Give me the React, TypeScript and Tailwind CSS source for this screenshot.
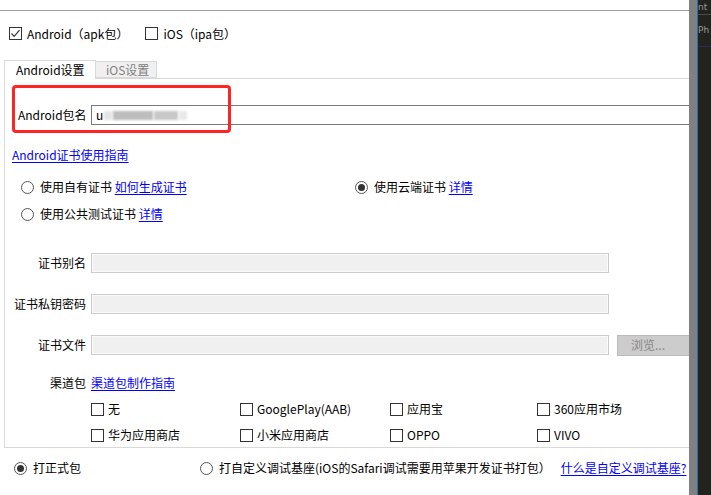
import React from "react";

const font = "font-['Noto_Sans_CJK_SC','Noto_Sans',sans-serif]";

function Check({ checked = false }: { checked?: boolean }) {
  return (
    <span className="flex h-[13px] w-[13px] shrink-0 items-center justify-center border border-[#333] bg-white">
      {checked && (
        <svg width="11" height="11" viewBox="0 0 11 11">
          <path d="M1.5 5.5 L4.2 8.3 L9.5 2.2" fill="none" stroke="#333" strokeWidth="1.2" />
        </svg>
      )}
    </span>
  );
}

function Radio({ checked = false }: { checked?: boolean }) {
  return (
    <span className="flex h-[13px] w-[13px] shrink-0 items-center justify-center rounded-full border border-[#555] bg-white">
      {checked && <span className="h-[7px] w-[7px] rounded-full bg-[#333]" />}
    </span>
  );
}

function Link({ children }: { children: React.ReactNode }) {
  return <span className="text-[#0000ff] underline underline-offset-2">{children}</span>;
}

function Field({ label, browse = false }: { label: string; browse?: boolean }) {
  return (
    <div className="flex h-[20px] items-center">
      <span className="w-[81px] shrink-0 text-right">{label}</span>
      <div className="ml-[5px] h-[20px] w-[518px] shrink-0 border border-[#cccccc] bg-[#f0f0f0] shadow-[inset_0_0_0_1px_#fafafa]" />
      {browse && (
        <div className="ml-[8px] flex h-[21px] w-[80px] shrink-0 items-center border border-[#bbbbbb] bg-[#cccccc] pl-[13px] text-[#888]">
          浏览...
        </div>
      )}
    </div>
  );
}

function Channel({ label }: { label: string }) {
  return (
    <div className="flex h-[16px] items-center gap-[4px]">
      <Check />
      <span>{label}</span>
    </div>
  );
}

export default function App() {
  return (
    <div className={`flex h-[495px] w-[711px] overflow-hidden bg-white text-[12px] leading-none text-black ${font}`}>
      <div className="relative flex w-[689px] shrink-0 flex-col overflow-hidden">
        <div className="h-[11px] border-b border-[#a0a0a0]" />

        <div className="flex h-[45px] items-center gap-[5px] pl-[9px]">
          <Check checked />
          <span>Android（apk包）</span>
          <span className="ml-[12px]">
            <Check />
          </span>
          <span>iOS（ipa包）</span>
        </div>

        <div className="flex items-end pl-[4px] pt-[4px]">
          <div className="relative z-10 -mb-px flex h-[19px] w-[92px] items-center border border-b-0 border-[#d9d9d9] bg-white pl-[11px] pb-[1px]">
            Android设置
          </div>
          <div className="flex h-[17px] w-[61px] items-center border border-l-0 border-[#d9d9d9] bg-[#f0f0f0] pl-[10px] text-[#808080]">
            iOS设置
          </div>
        </div>

        <div className="relative ml-[4px] flex h-[370px] flex-col border-y border-l border-[#d9d9d9]">
          <div className="pointer-events-none absolute left-[7px] top-[6px] h-[48px] w-[219px] rounded-[4px] border-[3px] border-[#ff2424]" />

          <div className="mt-[26px] flex h-[20px] items-center pl-[13px]">
            <span className="w-[73px] shrink-0">Android包名</span>
            <div className="flex h-[20px] w-[640px] shrink-0 items-center gap-[1px] border border-[#7a7a7a] pl-[4px]">
              <span>u</span>
              <span className="h-[9px] w-[8px] bg-[#e4e4e4] blur-[1px]" />
              <span className="h-[9px] w-[40px] bg-[#bdbdbd] blur-[1px]" />
              <span className="h-[9px] w-[24px] bg-[#c8c8c8] blur-[1px]" />
              <span className="h-[9px] w-[8px] bg-[#e8e8e8] blur-[1px]" />
            </div>
          </div>

          <div className="mt-[22px] flex h-[16px] items-center pl-[7px]">
            <Link>Android证书使用指南</Link>
          </div>

          <div className="mt-[14px] flex h-[20px] items-center pl-[16px]">
            <div className="flex w-[334px] items-center gap-[6px]">
              <Radio />
              <span>
                使用自有证书 <Link>如何生成证书</Link>
              </span>
            </div>
            <div className="flex items-center gap-[6px]">
              <Radio checked />
              <span>
                使用云端证书 <Link>详情</Link>
              </span>
            </div>
          </div>

          <div className="mt-[7px] flex h-[20px] items-center gap-[6px] pl-[16px]">
            <Radio />
            <span>
              使用公共测试证书 <Link>详情</Link>
            </span>
          </div>

          <div className="mt-[29px]">
            <Field label="证书别名" />
          </div>
          <div className="mt-[21px]">
            <Field label="证书私钥密码" />
          </div>
          <div className="mt-[21px]">
            <Field label="证书文件" browse />
          </div>

          <div className="mt-[20px] flex h-[16px] items-center">
            <span className="w-[81px] text-right">渠道包</span>
            <span className="ml-[5px]">
              <Link>渠道包制作指南</Link>
            </span>
          </div>

          <div className="mt-[10px] grid grid-cols-[149px_150px_147px_1fr] gap-y-[10px] pl-[86px]">
            <Channel label="无" />
            <Channel label="GooglePlay(AAB)" />
            <Channel label="应用宝" />
            <Channel label="360应用市场" />
            <Channel label="华为应用商店" />
            <Channel label="小米应用商店" />
            <Channel label="OPPO" />
            <Channel label="VIVO" />
          </div>
        </div>

        <div className="mt-[10px] flex h-[20px] items-center whitespace-nowrap pl-[14px]">
          <div className="flex w-[186px] shrink-0 items-center gap-[6px]">
            <Radio checked />
            <span>打正式包</span>
          </div>
          <div className="flex shrink-0 items-center gap-[6px]">
            <Radio />
            <span>打自定义调试基座(iOS的Safari调试需要用苹果开发证书打包）</span>
          </div>
          <span className="ml-[10px] shrink-0">
            <Link>什么是自定义调试基座?</Link>
          </span>
        </div>
      </div>

      <div className="w-[8px] shrink-0 bg-[#808080]" />
      <div className="flex min-w-0 flex-1 flex-col overflow-hidden border-l border-[#2b6cb0] bg-[#22221e] text-[9px] text-[#9a9a9a] font-['DejaVu_Sans',sans-serif]">
        <div className="flex h-[15px] items-center border-b border-[#4a4a4a]">nt</div>
        <div className="flex h-[32px] items-center border-b border-[#2c2c55]">Ph</div>
      </div>
    </div>
  );
}
